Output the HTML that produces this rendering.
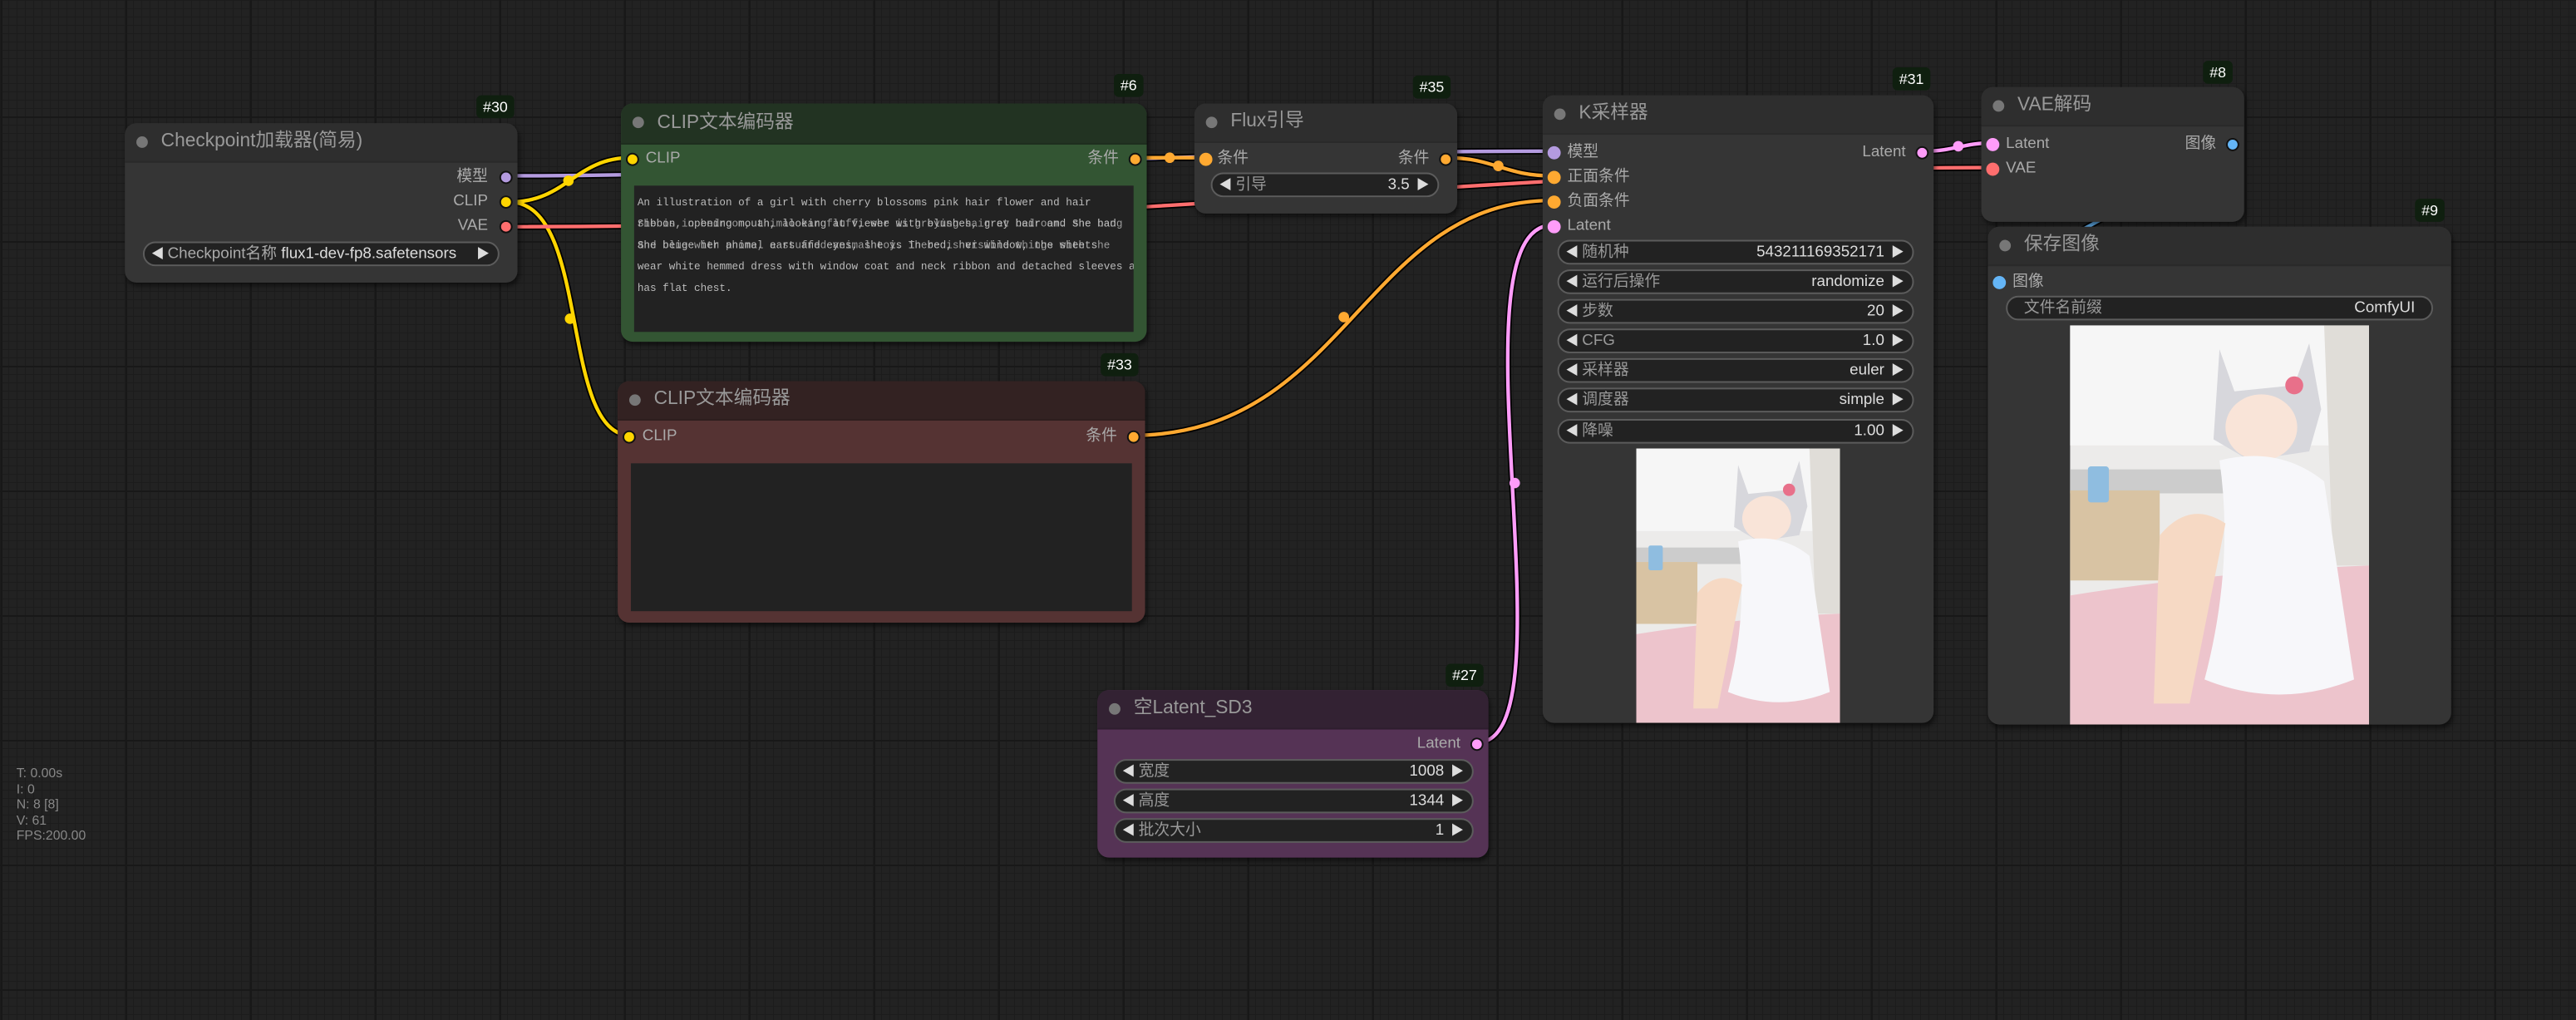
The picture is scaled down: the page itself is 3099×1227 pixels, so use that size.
<!DOCTYPE html>
<html><head><meta charset="utf-8">
<style>
html,body{margin:0;padding:0;}
body{width:3099px;height:1227px;overflow:hidden;position:relative;
background-color:#222;
background-image:
linear-gradient(#181818 2px,transparent 2px),
linear-gradient(90deg,#181818 2px,transparent 2px),
linear-gradient(#1c1c1c 1px,transparent 1px),
linear-gradient(90deg,#1c1c1c 1px,transparent 1px);
background-size:150px 150px,150px 150px,10px 10px,10px 10px;
background-position:-10px -10px,1px 0,0 0,0 0;
font-family:"Liberation Sans","Noto Sans CJK SC",sans-serif;}
#s{position:absolute;left:0;top:0;width:1568px;height:621px;transform:scale(1.97640);transform-origin:0 0;}
.n{position:absolute;background:#353535;border-radius:7px;box-shadow:1px 2px 3px rgba(0,0,0,.5);overflow:hidden}
.t{height:23px;background:#2e2e2e;border-bottom:1px solid #2a2a2a;color:#999;font-size:11.5px;line-height:23px;padding-left:22px;position:relative}
.t:before{content:"";position:absolute;left:7px;top:8px;width:7px;height:7px;border-radius:50%;background:#777}
.b{position:absolute;background:#0f1f0f;color:#fff;font-size:9px;line-height:14px;padding:0 4px;border-radius:3px}
.l{position:absolute;font-size:9.5px;color:#aaa;line-height:12px;white-space:nowrap}
.d{position:absolute;width:6px;height:6px;border-radius:50%;border:0.8px solid #111}
.w{position:absolute;height:13px;background:#222;border:1px solid #5c5c5c;border-radius:8px;font-size:9.5px;line-height:13px;color:#999}
.w .a{position:absolute;left:4px;color:#ddd;font-size:8px}
.w .z{position:absolute;right:5px;color:#ddd;font-size:8px}
.w .k{position:absolute;left:14px}
.w .v{position:absolute;right:17px;color:#ddd}
.ta{position:absolute;background:#222;font-family:"Liberation Mono",monospace;font-size:6.4px;color:#bbb;line-height:13px;white-space:nowrap;overflow:hidden}
.st{position:absolute;left:10px;top:466px;font-size:8px;color:#888;line-height:9.6px}
</style></head><body>
<div id="s">
<svg width="1568" height="621" style="position:absolute;left:0;top:0" fill="none" stroke-linecap="round">
<g stroke="#000" stroke-width="4">
<path d="M310 107 C500 107 700 92 945 92"/>
<path d="M310 123 C345 123 350 96 384 96"/>
<path d="M310 123 C360 123 340 265 384 265"/>
<path d="M310 138 C700 138 900 102 1212 102"/>
<path d="M691 96 C710 96 715 96 733 96"/>
<path d="M880 96 C910 96 915 107 945 107"/>
<path d="M689 265 C820 265 830 122 945 122"/>
<path d="M899 452 C960 452 880 137 945 137"/>
<path d="M1171 92 C1190 92 1195 87 1212 87"/>
<path d="M1358 87 C1330 110 1260 140 1216 171"/>
</g>
<g stroke-width="2.2">
<path stroke="#b49be0" d="M310 107 C500 107 700 92 945 92"/>
<path stroke="#ffd500" d="M310 123 C345 123 350 96 384 96"/>
<path stroke="#ffd500" d="M310 123 C360 123 340 265 384 265"/>
<path stroke="#ff6e6e" d="M310 138 C700 138 900 102 1212 102"/>
<path stroke="#ffa931" d="M691 96 C710 96 715 96 733 96"/>
<path stroke="#ffa931" d="M880 96 C910 96 915 107 945 107"/>
<path stroke="#ffa931" d="M689 265 C820 265 830 122 945 122"/>
<path stroke="#ff9cf9" d="M899 452 C960 452 880 137 945 137"/>
<path stroke="#ff9cf9" d="M1171 92 C1190 92 1195 87 1212 87"/>
<path stroke="#64b5f6" d="M1358 87 C1330 110 1260 140 1216 171"/>
</g>
<g stroke="none">
<circle cx="346" cy="110" r="3.2" fill="#ffd500"/>
<circle cx="347" cy="194" r="3.2" fill="#ffd500"/>
<circle cx="712" cy="96" r="3.2" fill="#ffa931"/>
<circle cx="912" cy="101" r="3.2" fill="#ffa931"/>
<circle cx="818" cy="193" r="3.2" fill="#ffa931"/>
<circle cx="922" cy="294" r="3.2" fill="#ff9cf9"/>
<circle cx="1192" cy="89" r="3.2" fill="#ff9cf9"/>
<circle cx="1288" cy="129" r="3.2" fill="#64b5f6"/>
</g>
</svg>

<!-- Checkpoint -->
<div class="b" style="left:290px;top:58px">#30</div>
<div class="n" style="left:76px;top:75px;width:239px;height:97px">
<div class="t">Checkpoint加载器(简易)</div>
<div class="l" style="right:18px;top:27px">模型</div>
<div class="l" style="right:18px;top:42px">CLIP</div>
<div class="l" style="right:18px;top:57px">VAE</div>
<div class="d" style="right:3px;top:29px;background:#b49be0"></div>
<div class="d" style="right:3px;top:44px;background:#ffd500"></div>
<div class="d" style="right:3px;top:59px;background:#ff6e6e"></div>
<div class="w" style="left:11px;top:72px;width:215px"><span class="a">◀</span><span class="k" style="color:#aaa">Checkpoint名称 <span style="color:#ddd">flux1-dev-fp8.safetensors</span></span><span class="z">▶</span></div>
</div>

<!-- CLIP 6 -->
<div class="b" style="left:678px;top:45px">#6</div>
<div class="n" style="left:378px;top:63px;width:320px;height:145px;background:#335533">
<div class="t" style="background:#223322;border-bottom-color:#1e2e1e;height:24px;line-height:24px">CLIP文本编码器</div>
<div class="d" style="left:3px;top:30px;background:#ffd500"></div>
<div class="l" style="left:15px;top:28px">CLIP</div>
<div class="l" style="right:17px;top:28px">条件</div>
<div class="d" style="right:3px;top:30px;background:#ffa931"></div>
<div class="ta" style="left:8px;top:50px;width:304px;height:89px">
<div style="position:absolute;left:2px;top:4px">An illustration of a girl with cherry blossoms pink hair flower and hair</div>
<div style="position:absolute;left:2px;top:17px">ribbon, opening mouth, looking at viewer with blushes, grey hair and she had</div>
<div style="position:absolute;left:2px;top:17px;opacity:.8">She is in bedroom, animal ear fluff, she is greying hair at bedroom. She bang</div>
<div style="position:absolute;left:2px;top:30px">She beige her animal ears and eyes, she is in bed, her window, the sheets</div>
<div style="position:absolute;left:2px;top:30px;opacity:.8">and blue with phone, a stuffed animal toy. There is visible things with she</div>
<div style="position:absolute;left:2px;top:43px">wear white hemmed dress with window coat and neck ribbon and detached sleeves and</div>
<div style="position:absolute;left:2px;top:56px">has flat chest.</div>
</div>
</div>

<!-- CLIP 33 -->
<div class="b" style="left:670px;top:215px">#33</div>
<div class="n" style="left:376px;top:232px;width:321px;height:147px;background:#553333">
<div class="t" style="background:#332222;border-bottom-color:#2e1e1e;height:23px">CLIP文本编码器</div>
<div class="d" style="left:3px;top:30px;background:#ffd500"></div>
<div class="l" style="left:15px;top:28px">CLIP</div>
<div class="l" style="right:17px;top:28px">条件</div>
<div class="d" style="right:3px;top:30px;background:#ffa931"></div>
<div class="ta" style="left:8px;top:50px;width:305px;height:90px"></div>
</div>

<!-- Flux -->
<div class="b" style="left:860px;top:46px">#35</div>
<div class="n" style="left:727px;top:63px;width:160px;height:67px">
<div class="t">Flux引导</div>
<div class="d" style="left:3px;top:30px;background:#ffa931;border-color:#ffa931"></div>
<div class="l" style="left:14px;top:28px">条件</div>
<div class="l" style="right:17px;top:28px">条件</div>
<div class="d" style="right:3px;top:30px;background:#ffa931"></div>
<div class="w" style="left:10px;top:42px;width:137px"><span class="a">◀</span><span class="k">引导</span><span class="v">3.5</span><span class="z">▶</span></div>
</div>

<!-- KSampler -->
<div class="b" style="left:1152px;top:41px">#31</div>
<div class="n" style="left:939px;top:58px;width:238px;height:382px">
<div class="t">K采样器</div>
<div class="d" style="left:3px;top:31px;background:#b49be0;border-color:#b49be0"></div>
<div class="d" style="left:3px;top:46px;background:#ffa931;border-color:#ffa931"></div>
<div class="d" style="left:3px;top:61px;background:#ffa931;border-color:#ffa931"></div>
<div class="d" style="left:3px;top:76px;background:#ff9cf9;border-color:#ff9cf9"></div>
<div class="l" style="left:15px;top:29px">模型</div>
<div class="l" style="left:15px;top:44px">正面条件</div>
<div class="l" style="left:15px;top:59px">负面条件</div>
<div class="l" style="left:15px;top:74px">Latent</div>
<div class="l" style="right:17px;top:29px">Latent</div>
<div class="d" style="right:3px;top:31px;background:#ff9cf9"></div>
<div class="w" style="left:9px;top:88px;width:215px"><span class="a">◀</span><span class="k">随机种</span><span class="v">543211169352171</span><span class="z">▶</span></div>
<div class="w" style="left:9px;top:106px;width:215px"><span class="a">◀</span><span class="k">运行后操作</span><span class="v">randomize</span><span class="z">▶</span></div>
<div class="w" style="left:9px;top:124px;width:215px"><span class="a">◀</span><span class="k">步数</span><span class="v">20</span><span class="z">▶</span></div>
<div class="w" style="left:9px;top:142px;width:215px"><span class="a">◀</span><span class="k">CFG</span><span class="v">1.0</span><span class="z">▶</span></div>
<div class="w" style="left:9px;top:160px;width:215px"><span class="a">◀</span><span class="k">采样器</span><span class="v">euler</span><span class="z">▶</span></div>
<div class="w" style="left:9px;top:178px;width:215px"><span class="a">◀</span><span class="k">调度器</span><span class="v">simple</span><span class="z">▶</span></div>
<div class="w" style="left:9px;top:197px;width:215px"><span class="a">◀</span><span class="k">降噪</span><span class="v">1.00</span><span class="z">▶</span></div>
<svg style="position:absolute;left:57px;top:215px" width="124" height="167" viewBox="0 0 100 133" preserveAspectRatio="none">
<rect width="100" height="133" fill="#ecebea"/>
<rect x="0" y="0" width="100" height="40" fill="#f6f6f6"/>
<path d="M0 48 H70 V56 H0Z" fill="#ccc"/>
<rect x="0" y="55" width="30" height="30" fill="#d8c3a3"/>
<rect x="6" y="47" width="7" height="12" rx="1" fill="#8fbde0"/>
<path d="M85 0 H100 V80 H88Z" fill="#e0ddd8"/>
<path d="M0 90 Q50 82 100 80 V133 H0Z" fill="#edc4cc"/>
<path d="M50 8 L55 22 L75 20 L80 6 L84 28 L80 42 L60 45 L48 38 Z" fill="#d7d7dc"/>
<ellipse cx="64" cy="34" rx="12" ry="11" fill="#f9e4d8"/>
<path d="M50 45 Q70 40 85 52 L95 118 Q70 128 45 118 Q55 80 50 45Z" fill="#f7f7fa"/>
<path d="M30 70 Q40 58 52 66 L40 126 L28 126 Z" fill="#f6d9c4"/>
<circle cx="75" cy="20" r="3" fill="#e8708a"/>
</svg>
</div>

<!-- VAE decode -->
<div class="b" style="left:1341px;top:37px">#8</div>
<div class="n" style="left:1206px;top:53px;width:160px;height:82px">
<div class="t">VAE解码</div>
<div class="d" style="left:3px;top:31px;background:#ff9cf9;border-color:#ff9cf9"></div>
<div class="d" style="left:3px;top:46px;background:#ff6e6e;border-color:#ff6e6e"></div>
<div class="l" style="left:15px;top:29px">Latent</div>
<div class="l" style="left:15px;top:44px">VAE</div>
<div class="l" style="right:17px;top:29px">图像</div>
<div class="d" style="right:3px;top:31px;background:#64b5f6"></div>
</div>

<!-- Save image -->
<div class="b" style="left:1470px;top:121px">#9</div>
<div class="n" style="left:1210px;top:138px;width:282px;height:303px">
<div class="t">保存图像</div>
<div class="d" style="left:3px;top:30px;background:#64b5f6;border-color:#64b5f6"></div>
<div class="l" style="left:15px;top:28px">图像</div>
<div class="w" style="left:11px;top:42px;width:258px"><span class="k" style="left:10px">文件名前缀</span><span class="v" style="right:10px">ComfyUI</span></div>
<svg style="position:absolute;left:50px;top:60px" width="182" height="243" viewBox="0 0 100 133" preserveAspectRatio="none">
<rect width="100" height="133" fill="#ecebea"/>
<rect x="0" y="0" width="100" height="40" fill="#f6f6f6"/>
<path d="M0 48 H70 V56 H0Z" fill="#ccc"/>
<rect x="0" y="55" width="30" height="30" fill="#d8c3a3"/>
<rect x="6" y="47" width="7" height="12" rx="1" fill="#8fbde0"/>
<path d="M85 0 H100 V80 H88Z" fill="#e0ddd8"/>
<path d="M0 90 Q50 82 100 80 V133 H0Z" fill="#edc4cc"/>
<path d="M50 8 L55 22 L75 20 L80 6 L84 28 L80 42 L60 45 L48 38 Z" fill="#d7d7dc"/>
<ellipse cx="64" cy="34" rx="12" ry="11" fill="#f9e4d8"/>
<path d="M50 45 Q70 40 85 52 L95 118 Q70 128 45 118 Q55 80 50 45Z" fill="#f7f7fa"/>
<path d="M30 70 Q40 58 52 66 L40 126 L28 126 Z" fill="#f6d9c4"/>
<circle cx="75" cy="20" r="3" fill="#e8708a"/>
</svg>
</div>

<!-- Empty latent -->
<div class="b" style="left:880px;top:404px">#27</div>
<div class="n" style="left:668px;top:420px;width:238px;height:102px;background:#553355">
<div class="t" style="background:#332233;border-bottom-color:#2e1e2e">空Latent_SD3</div>
<div class="l" style="right:17px;top:27px">Latent</div>
<div class="d" style="right:3px;top:29px;background:#ff9cf9"></div>
<div class="w" style="left:10px;top:42px;width:217px"><span class="a">◀</span><span class="k">宽度</span><span class="v">1008</span><span class="z">▶</span></div>
<div class="w" style="left:10px;top:60px;width:217px"><span class="a">◀</span><span class="k">高度</span><span class="v">1344</span><span class="z">▶</span></div>
<div class="w" style="left:10px;top:78px;width:217px"><span class="a">◀</span><span class="k">批次大小</span><span class="v">1</span><span class="z">▶</span></div>
</div>

<div class="st">T: 0.00s<br>I: 0<br>N: 8 [8]<br>V: 61<br>FPS:200.00</div>
</div>
</body></html>
